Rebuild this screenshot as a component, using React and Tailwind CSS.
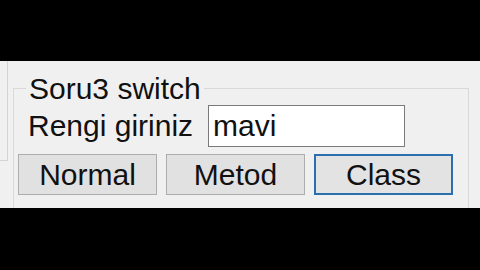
export default function App() {
  const font = { fontFamily: '"Liberation Sans", Arial, sans-serif' };
  return (
    <div className="w-[480px] h-[270px] bg-black flex flex-col overflow-hidden" style={font}>
      <div className="h-[61px] shrink-0 bg-black" />
      <div className="h-[147px] shrink-0 bg-[#f0f0f0] flex overflow-hidden">
        {/* edge of a neighbouring control */}
        <div className="w-[8px] h-[100px] shrink-0 border-r border-b border-[#d4d4d4]" />
        <div className="ml-[5px] mt-[27px] w-[456px] h-[120px] shrink-0 relative border-t border-l border-r border-[#d9d9d9]">
          <span className="absolute left-[12px] top-[-15px] px-[3px] bg-[#f0f0f0] text-[30px] leading-[30px] text-[#111]">
            Soru3 switch
          </span>
          <div className="pt-[16px] pl-[14px] flex items-center">
            <span className="text-[30px] leading-[30px] text-[#111] w-[166px] shrink-0">Rengi giriniz</span>
            <div className="ml-[14px] w-[197px] h-[42px] bg-white border border-[#7a7a7a] flex items-center pl-[4px] text-[30px] leading-[30px] text-[#111]">
              mavi
            </div>
          </div>
          <div className="mt-[7px] pl-[4px] flex gap-[9px]">
            <button className="w-[139px] h-[41px] bg-[#e1e1e1] border border-[#adadad] text-[30px] leading-[30px] text-[#111]">
              Normal
            </button>
            <button className="w-[139px] h-[41px] bg-[#e1e1e1] border border-[#adadad] text-[30px] leading-[30px] text-[#111]">
              Metod
            </button>
            <button className="w-[139px] h-[41px] bg-[#e3e3e3] border-2 border-[#2b6fae] text-[30px] leading-[30px] text-[#111]">
              Class
            </button>
          </div>
        </div>
      </div>
      <div className="flex-1 bg-black" />
    </div>
  );
}
